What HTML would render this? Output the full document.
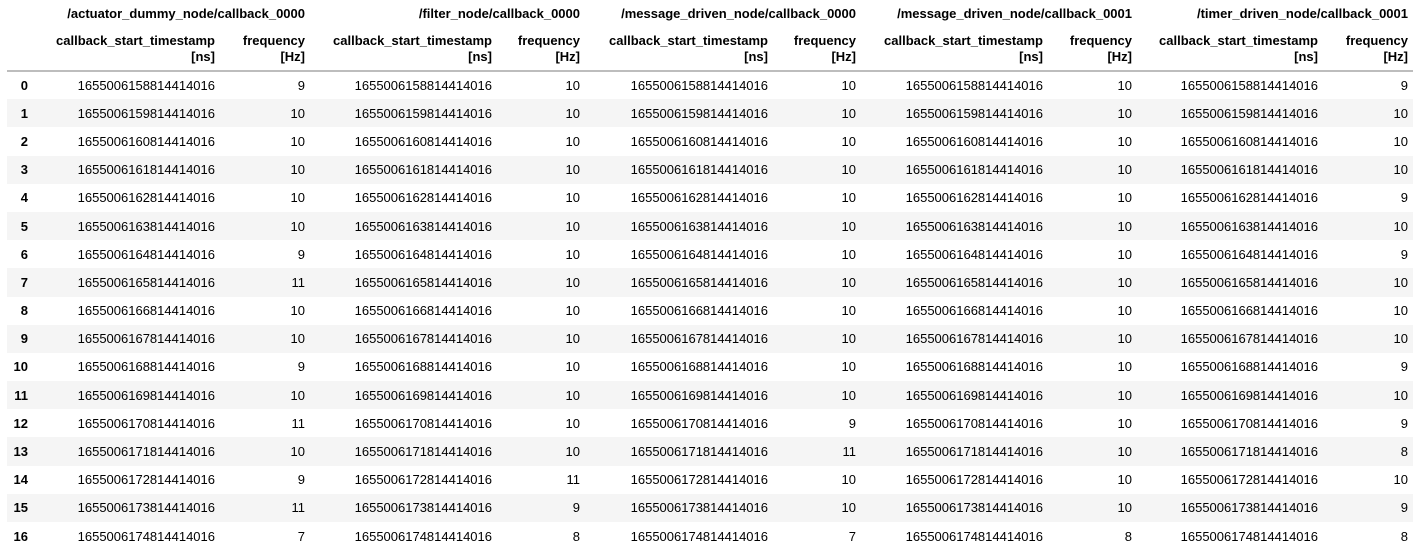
<!DOCTYPE html>
<html><head><meta charset="utf-8"><style>
html,body{margin:0;padding:0;background:#fff;width:1415px;height:554px;overflow:hidden}
table{position:absolute;left:7px;top:0;border-collapse:collapse;table-layout:fixed;font-family:"Liberation Sans",sans-serif;font-size:13px;color:#000}
td,th{padding:0 5px;text-align:right;white-space:nowrap;overflow:visible}
th{font-weight:bold}
tr.h1 th{height:27px;line-height:16px;vertical-align:middle}
tr.h2 th{height:43px;line-height:16px;vertical-align:middle;border-bottom:2px solid #bdbdbd}
tbody tr{height:28.2px}
tbody tr:nth-child(even){background:#f5f5f5}
</style></head><body>
<table>
<colgroup><col style="width:26px"><col style="width:187px"><col style="width:90px"><col style="width:187px"><col style="width:88px"><col style="width:188px"><col style="width:88px"><col style="width:187px"><col style="width:89px"><col style="width:186px"><col style="width:90px"></colgroup>
<thead>
<tr class="h1"><th></th><th colspan="2">/actuator_dummy_node/callback_0000</th><th colspan="2">/filter_node/callback_0000</th><th colspan="2">/message_driven_node/callback_0000</th><th colspan="2">/message_driven_node/callback_0001</th><th colspan="2">/timer_driven_node/callback_0001</th></tr>
<tr class="h2"><th></th><th>callback_start_timestamp<br>[ns]</th><th>frequency<br>[Hz]</th><th>callback_start_timestamp<br>[ns]</th><th>frequency<br>[Hz]</th><th>callback_start_timestamp<br>[ns]</th><th>frequency<br>[Hz]</th><th>callback_start_timestamp<br>[ns]</th><th>frequency<br>[Hz]</th><th>callback_start_timestamp<br>[ns]</th><th>frequency<br>[Hz]</th></tr>
</thead>
<tbody>
<tr><th>0</th><td>1655006158814414016</td><td>9</td><td>1655006158814414016</td><td>10</td><td>1655006158814414016</td><td>10</td><td>1655006158814414016</td><td>10</td><td>1655006158814414016</td><td>9</td></tr>
<tr><th>1</th><td>1655006159814414016</td><td>10</td><td>1655006159814414016</td><td>10</td><td>1655006159814414016</td><td>10</td><td>1655006159814414016</td><td>10</td><td>1655006159814414016</td><td>10</td></tr>
<tr><th>2</th><td>1655006160814414016</td><td>10</td><td>1655006160814414016</td><td>10</td><td>1655006160814414016</td><td>10</td><td>1655006160814414016</td><td>10</td><td>1655006160814414016</td><td>10</td></tr>
<tr><th>3</th><td>1655006161814414016</td><td>10</td><td>1655006161814414016</td><td>10</td><td>1655006161814414016</td><td>10</td><td>1655006161814414016</td><td>10</td><td>1655006161814414016</td><td>10</td></tr>
<tr><th>4</th><td>1655006162814414016</td><td>10</td><td>1655006162814414016</td><td>10</td><td>1655006162814414016</td><td>10</td><td>1655006162814414016</td><td>10</td><td>1655006162814414016</td><td>9</td></tr>
<tr><th>5</th><td>1655006163814414016</td><td>10</td><td>1655006163814414016</td><td>10</td><td>1655006163814414016</td><td>10</td><td>1655006163814414016</td><td>10</td><td>1655006163814414016</td><td>10</td></tr>
<tr><th>6</th><td>1655006164814414016</td><td>9</td><td>1655006164814414016</td><td>10</td><td>1655006164814414016</td><td>10</td><td>1655006164814414016</td><td>10</td><td>1655006164814414016</td><td>9</td></tr>
<tr><th>7</th><td>1655006165814414016</td><td>11</td><td>1655006165814414016</td><td>10</td><td>1655006165814414016</td><td>10</td><td>1655006165814414016</td><td>10</td><td>1655006165814414016</td><td>10</td></tr>
<tr><th>8</th><td>1655006166814414016</td><td>10</td><td>1655006166814414016</td><td>10</td><td>1655006166814414016</td><td>10</td><td>1655006166814414016</td><td>10</td><td>1655006166814414016</td><td>10</td></tr>
<tr><th>9</th><td>1655006167814414016</td><td>10</td><td>1655006167814414016</td><td>10</td><td>1655006167814414016</td><td>10</td><td>1655006167814414016</td><td>10</td><td>1655006167814414016</td><td>10</td></tr>
<tr><th>10</th><td>1655006168814414016</td><td>9</td><td>1655006168814414016</td><td>10</td><td>1655006168814414016</td><td>10</td><td>1655006168814414016</td><td>10</td><td>1655006168814414016</td><td>9</td></tr>
<tr><th>11</th><td>1655006169814414016</td><td>10</td><td>1655006169814414016</td><td>10</td><td>1655006169814414016</td><td>10</td><td>1655006169814414016</td><td>10</td><td>1655006169814414016</td><td>10</td></tr>
<tr><th>12</th><td>1655006170814414016</td><td>11</td><td>1655006170814414016</td><td>10</td><td>1655006170814414016</td><td>9</td><td>1655006170814414016</td><td>10</td><td>1655006170814414016</td><td>9</td></tr>
<tr><th>13</th><td>1655006171814414016</td><td>10</td><td>1655006171814414016</td><td>10</td><td>1655006171814414016</td><td>11</td><td>1655006171814414016</td><td>10</td><td>1655006171814414016</td><td>8</td></tr>
<tr><th>14</th><td>1655006172814414016</td><td>9</td><td>1655006172814414016</td><td>11</td><td>1655006172814414016</td><td>10</td><td>1655006172814414016</td><td>10</td><td>1655006172814414016</td><td>10</td></tr>
<tr><th>15</th><td>1655006173814414016</td><td>11</td><td>1655006173814414016</td><td>9</td><td>1655006173814414016</td><td>10</td><td>1655006173814414016</td><td>10</td><td>1655006173814414016</td><td>9</td></tr>
<tr><th>16</th><td>1655006174814414016</td><td>7</td><td>1655006174814414016</td><td>8</td><td>1655006174814414016</td><td>7</td><td>1655006174814414016</td><td>8</td><td>1655006174814414016</td><td>8</td></tr>
</tbody>
</table>
</body></html>
